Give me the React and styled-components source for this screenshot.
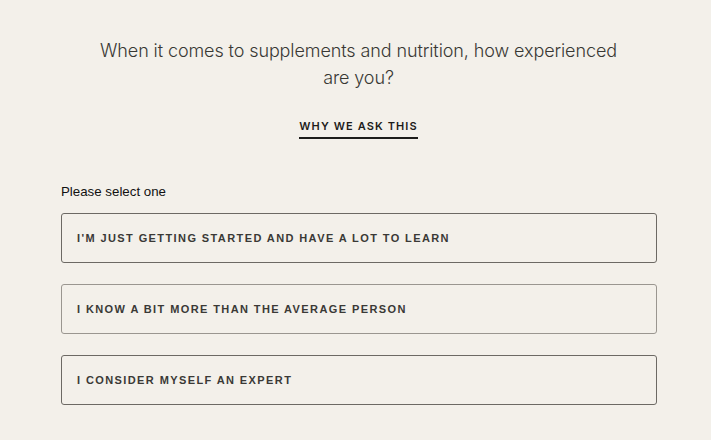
import React from 'react';
import styled, { createGlobalStyle } from 'styled-components';

const GlobalStyle = createGlobalStyle`
  html, body {
    margin: 0;
    padding: 0;
    background: #f3f0ea;
  }
  * { box-sizing: border-box; }
`;

const Page = styled.div`
  width: 711px;
  min-height: 440px;
  padding: 37px 55px 0 61px;
  display: flex;
  flex-direction: column;
  align-items: center;
`;

const Question = styled.h1`
  margin: 0;
  width: 530px;
  text-align: center;
  font-family: Inter, "Liberation Sans", sans-serif;
  font-weight: 300;
  font-size: 18px;
  line-height: 27px;
  color: #393834;
  letter-spacing: -0.1px;
`;

const WhyLink = styled.a`
  margin-top: 28px;
  padding-bottom: 4px;
  border-bottom: 2px solid #1d1c1a;
  font-family: Inter, "Liberation Sans", sans-serif;
  font-weight: 600;
  font-size: 11px;
  line-height: 14px;
  letter-spacing: 1.1px;
  color: #1d1c1a;
  text-decoration: none;
  cursor: pointer;
`;

const Form = styled.div`
  align-self: stretch;
  margin-top: 45px;
  display: flex;
  flex-direction: column;
`;

const Label = styled.div`
  font-family: "Liberation Sans", Arial, sans-serif;
  font-size: 13.3px;
  line-height: 16px;
  color: #111;
  margin-bottom: 13px;
`;

const Options = styled.div`
  display: flex;
  flex-direction: column;
  gap: 21px;
`;

const Option = styled.button`
  width: 596px;
  height: 50px;
  padding: 0 15px;
  display: flex;
  align-items: center;
  background: transparent;
  border: 1px solid ${p => (p.$light ? '#9a9690' : '#6c6964')};
  border-radius: 3px;
  font-family: "Liberation Sans", Arial, sans-serif;
  font-weight: 700;
  font-size: 11px;
  letter-spacing: 1.4px;
  text-transform: uppercase;
  color: #3a3936;
  cursor: pointer;
  text-align: left;
`;

const answers = [
  "I'm just getting started and have a lot to learn",
  'I know a bit more than the average person',
  'I consider myself an expert',
];

export default function App() {
  return (
    <>
      <GlobalStyle />
      <Page>
        <Question>
          When it comes to supplements and nutrition, how experienced are you?
        </Question>
        <WhyLink>WHY WE ASK THIS</WhyLink>
        <Form>
          <Label>Please select one</Label>
          <Options>
            {answers.map((a, i) => (
              <Option key={a} $light={i === 1}>{a}</Option>
            ))}
          </Options>
        </Form>
      </Page>
    </>
  );
}
